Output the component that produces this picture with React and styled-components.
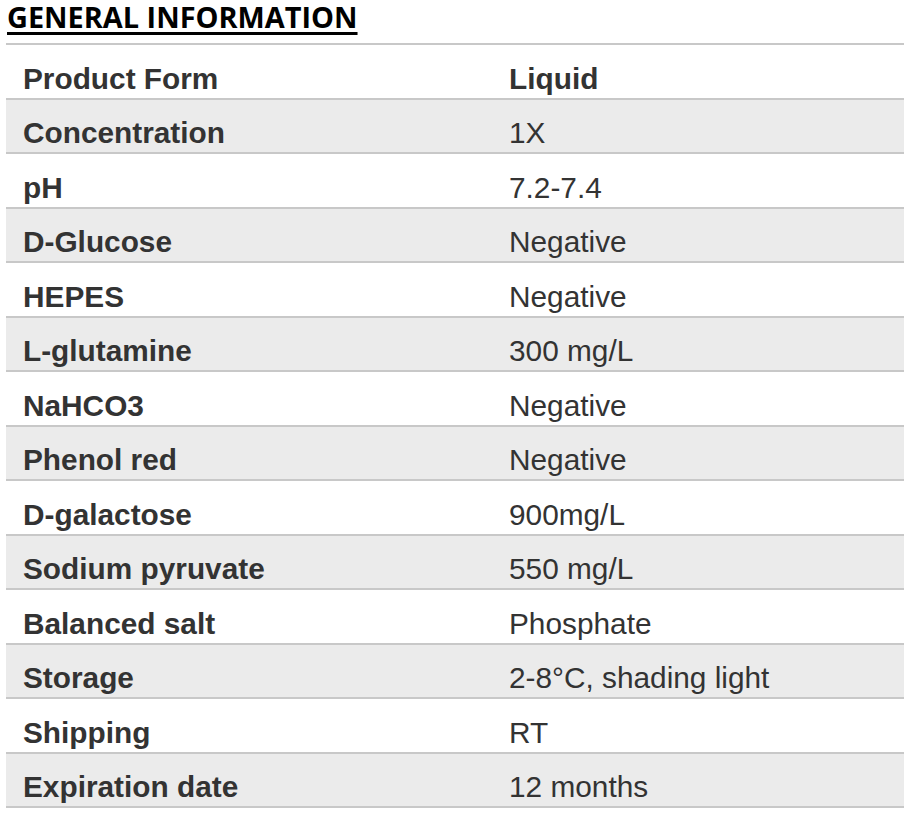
import React from "react";
import styled, { createGlobalStyle } from "styled-components";

const GlobalStyle = createGlobalStyle`
  html, body {
    margin: 0;
    padding: 0;
    background: #ffffff;
  }
`;

const Page = styled.div`
  width: 898px;
  padding: 0 0 0 6px;
`;

const Heading = styled.h2`
  margin: 0 0 9px 1px;
  font-family: "Open Sans", "Liberation Sans", sans-serif;
  font-weight: 700;
  font-size: 28.9px;
  line-height: 34px;
  color: #000000;
  text-decoration: underline;
  text-decoration-thickness: 3px;
  text-underline-offset: 4px;
`;

const Table = styled.div`
  border-top: 2px solid #c8c8c8;
`;

const Row = styled.div`
  display: grid;
  grid-template-columns: 486px 1fr;
  align-items: end;
  height: 54.5px;
  box-sizing: border-box;
  border-bottom: 2px solid #c8c8c8;
  background: ${props => (props.shaded ? "#ebebeb" : "#ffffff")};
`;

const Cell = styled.div`
  padding: 0 0 4px 17px;
  font-family: "Liberation Sans", Arial, sans-serif;
  font-size: 29.8px;
  line-height: 30px;
  font-weight: ${props => (props.bold ? 700 : 400)};
  color: #333333;
  white-space: nowrap;
`;

const rows = [
  ["Product Form", "Liquid", true],
  ["Concentration", "1X"],
  ["pH", "7.2-7.4"],
  ["D-Glucose", "Negative"],
  ["HEPES", "Negative"],
  ["L-glutamine", "300 mg/L"],
  ["NaHCO3", "Negative"],
  ["Phenol red", "Negative"],
  ["D-galactose", "900mg/L"],
  ["Sodium pyruvate", "550 mg/L"],
  ["Balanced salt", "Phosphate"],
  ["Storage", "2-8°C, shading light"],
  ["Shipping", "RT"],
  ["Expiration date", "12 months"]
];

export default function App() {
  return (
    <Page>
      <GlobalStyle />
      <Heading>GENERAL INFORMATION</Heading>
      <Table>
        {rows.map(([label, value, strongValue], i) => (
          <Row key={label} shaded={i % 2 === 1}>
            <Cell bold>{label}</Cell>
            <Cell bold={strongValue}>{value}</Cell>
          </Row>
        ))}
      </Table>
    </Page>
  );
}
